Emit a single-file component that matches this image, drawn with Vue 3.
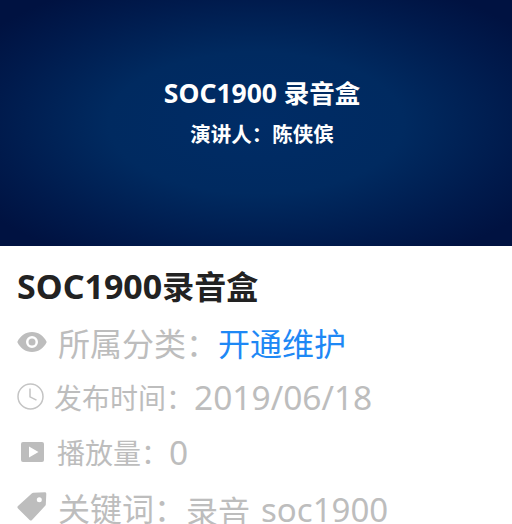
<script setup>
const rows = [
  { icon: 'eye', label: '所属分类：', value: '开通维护', cls: 'row-eye' },
  { icon: 'clock', label: '发布时间：', value: '2019/06/18', cls: 'row-clock' },
  { icon: 'play', label: '播放量：', value: '0', cls: 'row-play' },
  { icon: 'tag', label: '关键词：', value: '录音', extra: 'soc1900', cls: 'row-tag' }
]
</script>

<template>
  <div class="page">
    <div class="banner">
      <div class="banner-title"><span class="banner-latin">SOC1900</span> 录音盒</div>
      <div class="banner-sub">演讲人：陈侠傧</div>
    </div>
    <div class="info">
      <h1 class="title"><span class="title-latin">SOC1900</span>录音盒</h1>
      <div v-for="r in rows" :key="r.icon" class="row" :class="r.cls">
        <svg v-if="r.icon === 'eye'" class="icon" width="30" height="20" viewBox="0 0 30 20">
          <path fill="#bdbdbd" fill-rule="evenodd" d="M15 0C8.500 0 3 4 .3 10 3 16 8.500 20 15 20s12-4 14.700-10C27 4 21.500 0 15 0zm0 16a6 6 0 1 1 0-12 6 6 0 0 1 0 12zM15 6.500a3.500 3.500 0 1 0 0 7 3.500 3.500 0 0 0 0-7z"/>
        </svg>
        <svg v-else-if="r.icon === 'clock'" class="icon" width="27" height="27" viewBox="0 0 27 27">
          <circle cx="13.500" cy="13.500" r="12.500" fill="none" stroke="#c4c4c4" stroke-width="1.500"/>
          <path d="M13 5.500v8.300l6.500 3.400" fill="none" stroke="#c4c4c4" stroke-width="1.500"/>
        </svg>
        <svg v-else-if="r.icon === 'play'" class="icon" width="23" height="20" viewBox="0 0 23 20">
          <path fill="#bdbdbd" fill-rule="evenodd" d="M2 0h19a2 2 0 0 1 2 2v16a2 2 0 0 1-2 2H2a2 2 0 0 1-2-2V2a2 2 0 0 1 2-2zm6 4.500v11L17.500 10z"/>
        </svg>
        <svg v-else class="icon" width="30" height="29" viewBox="0 0 30 29">
          <path fill="#bdbdbd" fill-rule="evenodd" d="M15 1.300a2 2 0 0 1 1.300-.6L27.800.3A1.500 1.500 0 0 1 29.300 1.900L28.800 12.500a2 2 0 0 1-.6 1.300L15 28a1.700 1.700 0 0 1-2.400 0L1 16.500a1.700 1.700 0 0 1 0-2.400zM22.300 5.200a2.500 2.500 0 1 0 0 5 2.500 2.500 0 0 0 0-5z"/>
        </svg>
        <span class="label">{{ r.label }}</span>
        <span class="value">{{ r.value }}</span>
        <span v-if="r.extra" class="extra">{{ r.extra }}</span>
      </div>
    </div>
  </div>
</template>

<style scoped>
.page {
  width: 512px;
  height: 524px;
  overflow: hidden;
  background: #fff;
  font-family: "Noto Sans", "Noto Sans CJK SC", sans-serif;
}
.banner {
  height: 246px;
  background: radial-gradient(ellipse 64% 64% at 50% 50%, #002c66 0%, #002a60 45%, #001a4c 80%, #001241 100%);
  color: #fff;
  display: flex;
  flex-direction: column;
  align-items: center;
  font-weight: 700;
  padding: 75px 0 0 12px;
  box-sizing: border-box;
}
.banner-title {
  font-size: 25.5px;
  line-height: 36px;
}
.banner-latin {
  font-size: 26.500px;
}
.banner-sub {
  font-size: 20.500px;
  line-height: 28px;
  margin-top: 9px;
}
.info {
  padding: 18px 0 0 17px;
}
.title {
  margin: 0 0 5px;
  font-size: 32px;
  line-height: 44px;
  font-weight: 700;
  color: #222;
}
.title-latin {
  font-size: 34px;
}
.row {
  display: flex;
  align-items: center;
  height: 55px;
  white-space: nowrap;
  font-size: 32px;
  color: #bdbdbd;
}
.icon {
  flex: none;
}
.row-eye .icon { margin-right: 11px; }
.row-clock .icon { margin-right: 10px; }
.row-play .icon { margin: 0 13px 0 4px; }
.row-tag .icon { margin: 0 11px 0 0; }
.row-eye .value {
  color: #1e88f5;
}
.row-clock .label,
.row-play .label {
  font-size: 28px;
}
.row-clock .value,
.row-play .value {
  font-size: 33.500px;
}
.row-tag .value {
  padding-top: 7px;
}
.extra {
  font-size: 33px;
  margin-left: 11px;
  padding-top: 5px;
}
</style>
